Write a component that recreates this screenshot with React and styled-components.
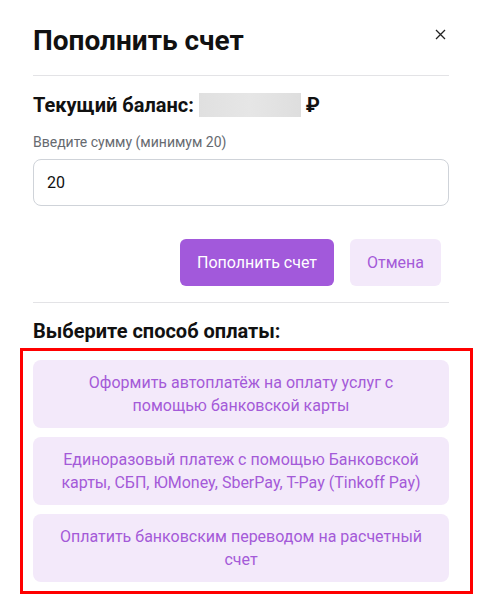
import React, { useState } from 'react';
import styled, { createGlobalStyle } from 'styled-components';

const colors = {
	text: '#111111',
	muted: '#666a70',
	border: '#e3e3e6',
	inputBorder: '#cfd3d9',
	primary: '#a259db',
	soft: '#f3e9fa',
	softText: '#a45ad8',
	highlight: '#ff0000'
};

const GlobalStyle = createGlobalStyle`
	html, body {
		margin: 0;
		padding: 0;
		background: #fff;
		font-family: Roboto, "Noto Sans", "Liberation Sans", sans-serif;
		color: ${colors.text};
	}
	* {
		box-sizing: border-box;
	}
`;

const Modal = styled.div`
	width: 484px;
	padding: 23px 35px 0 33px;
`;

const Header = styled.div`
	display: flex;
	justify-content: space-between;
	align-items: flex-start;
	padding-bottom: 17px;
	border-bottom: 1px solid ${colors.border};
`;

const Title = styled.h2`
	margin: 0;
	font-size: 28px;
	line-height: 35px;
	font-weight: 700;
`;

const CloseButton = styled.button`
	border: none;
	background: none;
	padding: 0;
	margin: 4px 2px 0 0;
	width: 14px;
	height: 14px;
	cursor: pointer;
	display: flex;
	align-items: center;
	justify-content: center;
`;

const Balance = styled.div`
	display: flex;
	align-items: center;
	gap: 5px;
	margin-top: 17px;
	font-size: 20px;
	font-weight: 700;
	line-height: 24px;
`;

const Blur = styled.span`
	display: inline-block;
	width: 102px;
	height: 24px;
	background: linear-gradient(90deg, #e0e0e0, #e6e6e6 50%, #dedede);
	filter: blur(0.5px);
`;

const Label = styled.label`
	display: block;
	margin-top: 16px;
	font-size: 14px;
	line-height: 18px;
	color: ${colors.muted};
`;

const Input = styled.input`
	display: block;
	width: 100%;
	height: 47px;
	margin-top: 8px;
	padding: 0 13px;
	border: 1px solid ${colors.inputBorder};
	border-radius: 8px;
	font-family: inherit;
	font-size: 16px;
	color: ${colors.text};
	outline: none;
`;

const Actions = styled.div`
	display: flex;
	justify-content: flex-end;
	gap: 16px;
	margin-top: 33px;
	padding: 0 8px 16px 0;
	border-bottom: 1px solid ${colors.border};
`;

const Button = styled.button`
	height: 47px;
	padding: 0 17px;
	border: none;
	border-radius: 6px;
	font-family: inherit;
	font-size: 16px;
	cursor: pointer;
	background: ${props => props.$primary ? colors.primary : colors.soft};
	color: ${props => props.$primary ? '#ffffff' : colors.softText};
`;

const SectionTitle = styled.h3`
	margin: 16px 0 0;
	font-size: 20px;
	line-height: 24px;
	font-weight: 700;
`;

const Highlight = styled.div`
	margin: 5px -24px 0 -13px;
	padding: 9px 21px 9px 10px;
	border: 3px solid ${colors.highlight};
	display: flex;
	flex-direction: column;
	gap: 9px;
`;

const Option = styled.button`
	height: 68px;
	width: 100%;
	padding: 0 20px;
	border: none;
	border-radius: 8px;
	background: ${colors.soft};
	color: ${colors.softText};
	font-family: inherit;
	font-size: 16px;
	line-height: 23px;
	text-align: center;
	cursor: pointer;
`;

const methods = [
	'Оформить автоплатёж на оплату услуг с помощью банковской карты',
	'Единоразовый платеж с помощью Банковской карты, СБП, ЮMoney, SberPay, T-Pay (Tinkoff Pay)',
	'Оплатить банковским переводом на расчетный счет'
];

export default function App() {
	const [amount, setAmount] = useState('20');

	return (
		<>
			<GlobalStyle />
			<Modal>
				<Header>
					<Title>Пополнить счет</Title>
					<CloseButton aria-label='Закрыть'>
						<svg width='11' height='11' viewBox='0 0 11 11'>
							<path d='M1 1L10 10M10 1L1 10' stroke='#222' strokeWidth='1.3' />
						</svg>
					</CloseButton>
				</Header>
				<Balance>
					Текущий баланс: <Blur /> ₽
				</Balance>
				<Label htmlFor='amount'>Введите сумму (минимум 20)</Label>
				<Input id='amount' value={amount} onChange={e => setAmount(e.target.value)} />
				<Actions>
					<Button $primary>Пополнить счет</Button>
					<Button>Отмена</Button>
				</Actions>
				<SectionTitle>Выберите способ оплаты:</SectionTitle>
				<Highlight>
					{methods.map(m => (
						<Option key={m}>{m}</Option>
					))}
				</Highlight>
			</Modal>
		</>
	);
}
